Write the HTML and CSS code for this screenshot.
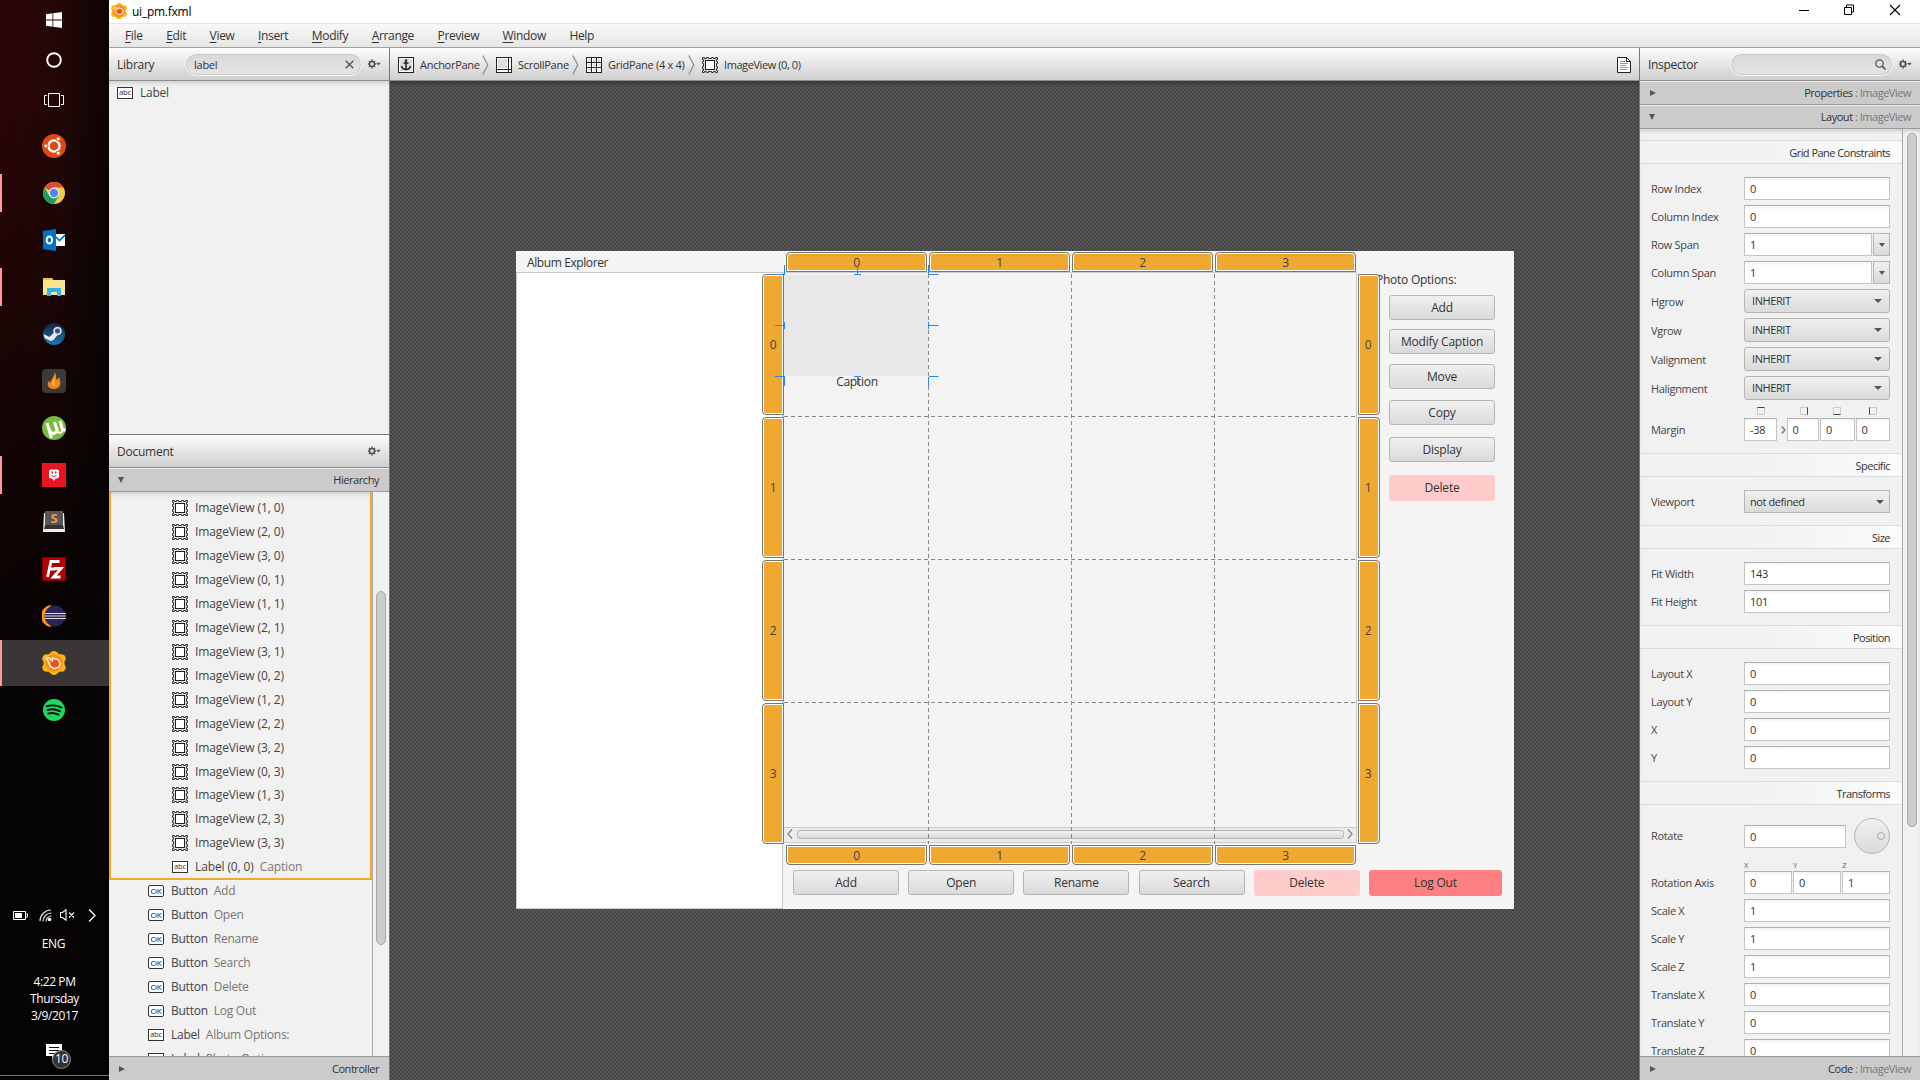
FILE: index.html
```html
<!DOCTYPE html>
<html lang="en">
<head>
<meta charset="utf-8">
<title>ui_pm.fxml</title>
<link rel="stylesheet" href="styles.css">
</head>
<body>
<svg class="defs" width="0" height="0" aria-hidden="true">
  <symbol id="imageview" viewBox="0 0 16 16"><path d="M.5.5h2v1h2v-1h2v1h3v-1h2v1h2v-1h2v2h-1v2h1v2h-1v3h1v2h-1v2h1v2h-2v-1h-2v1h-2v-1h-3v1h-2v-1h-2v1h-2v-2h1v-2h-1v-2h1v-3h-1v-2h1v-2h-1z" fill="#ddd" stroke="#333"/><rect x="3.5" y="3.5" width="9" height="9" fill="#fff" stroke="#222"/></symbol>
  <symbol id="abc" viewBox="0 0 16 16"><rect x=".5" y="2.5" width="15" height="11" fill="#fff" stroke="#333"/><text x="2" y="10.4" textLength="12" lengthAdjust="spacingAndGlyphs" font-size="7" fill="#333">abc</text></symbol>
  <symbol id="ok" viewBox="0 0 16 16"><rect x=".5" y="2.5" width="15" height="11" rx="1.5" fill="#fff" stroke="#333"/><text x="2.5" y="11" textLength="11" lengthAdjust="spacingAndGlyphs" font-size="8" fill="#222">OK</text></symbol>
  <symbol id="gear" viewBox="0 0 13 10"><circle cx="4" cy="5" r="2.5" fill="none" stroke="#555" stroke-width="1.6"/><path d="M4 .6v1.6M4 7.8v1.6M-.2 5h1.4M6.800 5h1.400M1 2l1 1M6 7l1 1M1 8l1-1M6 3l1-1" stroke="#555" stroke-width="1.5"/><path d="M8.200 3.800h4.600l-2.300 2.700z" fill="#555"/></symbol>
  <symbol id="crumb" viewBox="0 0 7 20"><path d="M.8.500l5 9.500-5 9.500" fill="none" stroke="#888" stroke-width="1.200"/></symbol>
  <symbol id="flower" viewBox="0 0 24 24"><g fill="#fdb515"><circle cx="12" cy="12" r="10.500"/><circle cx="12" cy="4.300" r="4.300"/><circle cx="12" cy="19.700" r="4.300"/><circle cx="4.600" cy="7.500" r="4.300"/><circle cx="19.400" cy="7.500" r="4.300"/><circle cx="4.600" cy="16.500" r="4.300"/><circle cx="19.400" cy="16.500" r="4.300"/></g><circle cx="12" cy="12" r="9" fill="#f9901e"/><circle cx="12.500" cy="12.500" r="4" fill="#f04e23"/><path d="M4.500 7.500l2-1 4 3.500 0-3 3 1 2.500.500 2.500 4-1.500 3.500-5 1.500-4-2.500-1-3z" fill="none" stroke="#fff" stroke-width="1.200"/></symbol>
</svg>
<div class="desktop">
  <nav class="taskbar">
    <div class="slot sys"><svg width="16" height="16" viewBox="0 0 16 16"><path d="M0 2.200L6.500 1.300v6.200H0zM7.300 1.200L16 0v7.500H7.300zM0 8.400h6.500v6.300L0 13.800zM7.300 8.400H16V16l-8.700-1.200z" fill="#fff"/></svg></div>
    <div class="slot sys"><svg width="16" height="16"><circle cx="8" cy="8" r="6.800" fill="none" stroke="#fff" stroke-width="1.900"/></svg></div>
    <div class="slot sys"><svg width="20" height="14"><path d="M4.500.5h11v13h-11zM3 2.500H.5v9H3M17 2.500h2.500v9H17" fill="none" stroke="#fff"/></svg></div>
    <div class="apps">
      <div class="slot"><svg width="24" height="24"><circle cx="12" cy="12" r="12" fill="#dd4814"/><circle cx="12" cy="12" r="5.600" fill="none" stroke="#fff" stroke-width="2.400"/><g stroke="#dd4814" stroke-width="1"><circle cx="3.900" cy="12" r="2.100" fill="#fff"/><circle cx="16.200" cy="4.900" r="2.100" fill="#fff"/><circle cx="16.200" cy="19.100" r="2.100" fill="#fff"/></g></svg></div>
      <div class="slot run"><svg width="22" height="22" viewBox="0 0 22 22"><circle cx="11" cy="11" r="11" fill="#fbc93d"/><path d="M11 11L1.500 5.500A11 11 0 0 1 20.500 5.500H11z" fill="#dc4b3e"/><path d="M1.500 5.500A11 11 0 0 0 11 22l4.800-8.300L11 11 6.200 13.700z" fill="#1a9f5a"/><circle cx="11" cy="11" r="5.400" fill="#eef"/><circle cx="11" cy="11" r="4.200" fill="#4a8af4"/></svg></div>
      <div class="slot"><svg width="22" height="22" viewBox="0 0 22 22"><path d="M0 2L13 0v22L0 20z" fill="#0072c6"/><path d="M13 5h9v12h-9z" fill="#fff"/><path d="M13 8l3.500 3.500L22 6" fill="none" stroke="#0072c6" stroke-width="1.600"/><ellipse cx="6.400" cy="11" rx="2.700" ry="3.600" fill="none" stroke="#fff" stroke-width="2"/></svg></div>
      <div class="slot run"><svg width="22" height="18" viewBox="0 0 22 18"><path d="M0 0h9l1 2h12v15H0z" fill="#fde48f"/><path d="M0 0h9l1 2H0z" fill="#f9c51f"/><path d="M4 18v-8h14v8h-4v-4H8v4z" fill="#35b0e8"/></svg></div>
      <div class="slot"><svg width="22" height="22"><defs><linearGradient id="st" x2="0" y2="1"><stop stop-color="#14213f"/><stop offset="1" stop-color="#1b78b0"/></linearGradient></defs><circle cx="11" cy="11" r="11" fill="url(#st)"/><path d="M.5 11l6 3 5-5 3 3-4 5-3 1-6-3z" fill="#e8e8ee"/><circle cx="14.500" cy="8" r="3.400" fill="#35558a" stroke="#dde" stroke-width="1.800"/></svg></div>
      <div class="slot"><svg width="24" height="24"><rect width="24" height="24" rx="4" fill="#3b3a3b"/><path d="M12.500 3c2.500 3.500 1 6 2.500 8l2-3c3 7 1 12-5 12s-8-5-5-8l1.500 2c0-4 4.500-6 4-11z" fill="#f58220"/><path d="M12.500 7c1 4-1 6 1 9l1.500-2c-1 4-4 4-5 2 0-4 2.500-5 2.500-9z" fill="#fdc02f"/></svg></div>
      <div class="slot"><svg width="24" height="24"><circle cx="12" cy="12" r="12" fill="#77bb41"/><path d="M5 7l4.500 15M7 13c2 6 6 5 7.500 2M12.500 6l3 9M18 5l2.500 9 3 0" fill="none" stroke="#fff" stroke-width="3"/><path d="M15 15c1.500 3 5 2 6-1" fill="none" stroke="#fff" stroke-width="2"/></svg></div>
      <div class="slot run"><svg width="24" height="24"><path fill="#ea1324" d="M0 0h24v24H0z"/><rect x="7" y="6.500" width="10" height="9" rx="2" fill="#fff"/><path d="M10 15h4l-2 3z" fill="#fff"/><path d="M9.500 8.500h1.500v2H9.500zM13 8.500h1.500v2H13z" fill="#ea1324"/><path d="M9.500 12c1 2 4 2 5 0" fill="none" stroke="#ea1324"/></svg></div>
      <div class="slot"><svg width="24" height="22"><path d="M2 2h20l1 19H1z" fill="#eee"/><path d="M3 0h18v14H3z" fill="#565656"/><path d="M3 14h18l1 4H2z" fill="#333"/><text x="12" y="12" text-anchor="middle" font-size="13" font-weight="700" fill="#f89b3c">S</text></svg></div>
      <div class="slot"><svg width="24" height="24"><rect x=".5" y=".5" width="23" height="23" fill="#b30000" stroke="#900" stroke-dasharray="1.500"/><path d="M5.500 20L9 4.500h8.500M7 12h6.500M12 11.500h7L11.500 20h7" fill="none" stroke="#fff" stroke-width="2.800"/></svg></div>
      <div class="slot"><svg width="24" height="22"><path d="M10 0a11 11 0 0 0 0 22A14 14 0 0 1 10 0" fill="#f7941e"/><circle cx="13" cy="11" r="10.500" fill="#2c2255"/><path d="M3 8.500h21M3 11h21M3 13.500h21" stroke="#dfe0f0" stroke-width="1.200"/></svg></div>
      <div class="slot run active"><svg width="24" height="24"><use href="#flower"/></svg></div>
      <div class="slot"><svg width="22" height="22"><circle cx="11" cy="11" r="11" fill="#1ed760"/><path d="M3.500 7.300c5-1.600 10.500-1 15 1.300M4.500 11c4.500-1.300 8.500-.8 12.500 1.300M5.300 14.500c4-1 7-.6 10.200 1.200" fill="none" stroke="#111" stroke-width="1.900" stroke-linecap="round"/></svg></div>
    </div>
    <div class="tray">
      <svg width="15" height="9"><path d="M.5.500h12v8H.5zM13 3h1.500v3H13" fill="none" stroke="#fff"/><path d="M2 2h7v5H2z" fill="#fff"/></svg>
      <svg width="13" height="13"><path d="M1 12A11 11 0 0 1 12 1M4 12.500A8.500 8.500 0 0 1 12.500 4M7 12.500A5.500 5.500 0 0 1 12.500 7" fill="none" stroke="#ddd" stroke-width="1.200"/><circle cx="10.500" cy="10.500" r="1.800" fill="#fff"/></svg>
      <svg width="15" height="12"><path d="M.5 3.500H2.500L6 .800v10.400L2.500 8.500H.5zM9 3.500l5 5M14 3.500l-5 5" fill="none" stroke="#fff" stroke-width="1.100"/></svg>
      <svg width="8" height="13"><path d="M1 .500l6 6-6 6" fill="none" stroke="#fff" stroke-width="1.300"/></svg>
    </div>
    <div class="lang">ENG</div>
    <div class="clock"><span>4:22 PM</span><span>Thursday</span><span>3/9/2017</span></div>
    <div class="notify"><svg width="16" height="16"><path d="M0 0h16v12H9l-3 3.500V12H0z" fill="#fff"/><path d="M3 3.500h10M3 6.500h10M3 9.500h6" stroke="#111"/></svg><span class="badge">10</span></div>
  </nav>

  <main class="app">
    <header class="titlebar">
      <svg width="16" height="16" class="appicon"><use href="#flower"/></svg><span class="title">ui_pm.fxml</span>
      <svg class="winbtns" width="102" height="12"><path d="M0 6.500h10" stroke="#000"/><path d="M45.500 3.500h7v7h-7zM47.500 3v-2h7v7h-2" fill="none" stroke="#000"/><path d="M91 1l10 10M101 1L91 11" stroke="#000" stroke-width="1.100"/></svg>
    </header>
    <nav class="menubar"><span><u>F</u>ile</span><span><u>E</u>dit</span><span><u>V</u>iew</span><span><u>I</u>nsert</span><span><u>M</u>odify</span><span><u>A</u>rrange</span><span><u>P</u>review</span><span><u>W</u>indow</span><span>Help</span></nav>
    <div class="workspace">
      <aside class="left">
        <div class="bar"><span class="barname">Library</span>
          <div class="pill lib"><span>label</span><svg width="9" height="9"><path d="M.700.700l7.600 7.600M8.300.700L.700 8.300" stroke="#555" stroke-width="1.400"/></svg></div>
          <svg width="13" height="10"><use href="#gear"/></svg></div>
        <div class="library"><div class="item"><svg width="16" height="16"><use href="#abc"/></svg>Label</div></div>
        <div class="bar doc"><span class="barname">Document</span><svg width="13" height="10"><use href="#gear"/></svg></div>
        <div class="fold"><i class="tri down"></i><span>Hierarchy</span></div>
        <div class="treewrap">
          <div class="tree">
            <div class="group">
              <div class="item"><svg width="16" height="16"><use href="#imageview"/></svg>ImageView (1, 0)</div>
              <div class="item"><svg width="16" height="16"><use href="#imageview"/></svg>ImageView (2, 0)</div>
              <div class="item"><svg width="16" height="16"><use href="#imageview"/></svg>ImageView (3, 0)</div>
              <div class="item"><svg width="16" height="16"><use href="#imageview"/></svg>ImageView (0, 1)</div>
              <div class="item"><svg width="16" height="16"><use href="#imageview"/></svg>ImageView (1, 1)</div>
              <div class="item"><svg width="16" height="16"><use href="#imageview"/></svg>ImageView (2, 1)</div>
              <div class="item"><svg width="16" height="16"><use href="#imageview"/></svg>ImageView (3, 1)</div>
              <div class="item"><svg width="16" height="16"><use href="#imageview"/></svg>ImageView (0, 2)</div>
              <div class="item"><svg width="16" height="16"><use href="#imageview"/></svg>ImageView (1, 2)</div>
              <div class="item"><svg width="16" height="16"><use href="#imageview"/></svg>ImageView (2, 2)</div>
              <div class="item"><svg width="16" height="16"><use href="#imageview"/></svg>ImageView (3, 2)</div>
              <div class="item short"><svg width="16" height="16"><use href="#imageview"/></svg>ImageView (0, 3)</div>
              <div class="item"><svg width="16" height="16"><use href="#imageview"/></svg>ImageView (1, 3)</div>
              <div class="item"><svg width="16" height="16"><use href="#imageview"/></svg>ImageView (2, 3)</div>
              <div class="item"><svg width="16" height="16"><use href="#imageview"/></svg>ImageView (3, 3)</div>
              <div class="item"><svg width="16" height="16"><use href="#abc"/></svg>Label (0, 0)<em>Caption</em></div>
            </div>
            <div class="siblings">
              <div class="item"><svg width="16" height="16"><use href="#ok"/></svg>Button<em>Add</em></div>
              <div class="item"><svg width="16" height="16"><use href="#ok"/></svg>Button<em>Open</em></div>
              <div class="item"><svg width="16" height="16"><use href="#ok"/></svg>Button<em>Rename</em></div>
              <div class="item"><svg width="16" height="16"><use href="#ok"/></svg>Button<em>Search</em></div>
              <div class="item"><svg width="16" height="16"><use href="#ok"/></svg>Button<em>Delete</em></div>
              <div class="item"><svg width="16" height="16"><use href="#ok"/></svg>Button<em>Log Out</em></div>
              <div class="item"><svg width="16" height="16"><use href="#abc"/></svg>Label<em>Album Options:</em></div>
              <div class="item"><svg width="16" height="16"><use href="#abc"/></svg>Label<em>Photo Options:</em></div>
            </div>
          </div>
          <div class="track"><div class="thumb tree-thumb"></div></div>
        </div>
        <div class="fold foot"><i class="tri right"></i><span>Controller</span></div>
      </aside>

      <section class="center">
        <div class="bar crumbs">
          <svg width="16" height="16"><rect x=".5" y=".5" width="15" height="15" fill="#fff" stroke="#222"/><path d="M2 2h12v12H2z" fill="#ddd"/><path d="M8 4v8M5.500 6h5M3.500 9c.500 2 2 3.500 4.500 3.500s4-1.500 4.500-3.500" fill="none" stroke="#222" stroke-width="1.500"/><circle cx="8" cy="3.500" r="1.200" fill="#222"/></svg><span class="c1">AnchorPane</span><svg class="sep" width="7" height="20"><use href="#crumb"/></svg>
          <svg width="16" height="16"><rect x=".5" y=".5" width="15" height="15" fill="#fff" stroke="#222"/><path d="M2 2h9v9H2z" fill="#ddd"/><path d="M12.500 1v15M1 12.500h15" stroke="#222"/></svg><span class="c2">ScrollPane</span><svg class="sep" width="7" height="20"><use href="#crumb"/></svg>
          <svg width="16" height="16"><rect x=".5" y=".5" width="15" height="15" fill="#fff" stroke="#222"/><path d="M2 2h3v3H2zM7 2h3v3H7zM12 2h2v3h-2zM2 7h3v2H2zM7 7h3v2H7zM12 7h2v2h-2zM2 12h3v2H2zM7 12h3v2H7z" fill="#ddd"/><path d="M5.500 0v16M10.500 0v16M0 5.500h16M0 10.500h16" stroke="#222"/></svg><span class="c3">GridPane (4 x 4)</span><svg class="sep" width="7" height="20"><use href="#crumb"/></svg>
          <svg width="16" height="16"><use href="#imageview"/></svg><span class="c4">ImageView (0, 0)</span>
          <svg class="docicon" width="14" height="16"><path d="M.5.500h9l4 4v11H.5z" fill="#fff" stroke="#222"/><path d="M9.500.500v4h4" fill="none" stroke="#222"/><path d="M3 4.500h5M3 6.500h8M3 8.500h6M3 10.500h8M3 12.500h7" stroke="#999"/></svg>
        </div>
        <div class="canvas">
          <div class="pane">
            <div class="album"><span>Album Explorer</span><div class="list"></div></div>
            <div class="scrollpane"><div class="hbar"><svg width="6" height="10"><path d="M5 .500L1 5l4 4.500" fill="none" stroke="#888" stroke-width="1.300"/></svg><div></div><svg width="6" height="10"><path d="M1 .500L5 5 1 9.500" fill="none" stroke="#888" stroke-width="1.300"/></svg></div></div>
            <div class="caption">Caption</div>
            <div class="photo"><span>Photo Options:</span>
              <b class="btn">Add</b><b class="btn">Modify Caption</b><b class="btn">Move</b><b class="btn">Copy</b><b class="btn">Display</b><b class="btn pink">Delete</b></div>
            <div class="actions"><b class="btn">Add</b><b class="btn">Open</b><b class="btn">Rename</b><b class="btn">Search</b><b class="btn pink">Delete</b><b class="btn red">Log Out</b></div>
            <svg class="lines" width="576" height="572"><g fill="none" stroke="#888" stroke-dasharray="4 3"><path d="M144.500 0v570M287.500 0v570M430.500 0v570M0 142.500h574M0 285.500h574M0 428.500h574"/></g></svg>
            <div class="heads top"><b>0</b><b>1</b><b>2</b><b>3</b></div>
            <div class="heads bottom"><b>0</b><b>1</b><b>2</b><b>3</b></div>
            <div class="heads side lft"><b>0</b><b>1</b><b>2</b><b>3</b></div>
            <div class="heads side rgt"><b>0</b><b>1</b><b>2</b><b>3</b></div>
            <svg class="handles" width="164" height="122"><path d="M9.500 0v9M0 9.500h10M82.500 1v8M79 9.500h7M153.500 0v9M154 9.500h9.500M0 60.500h9M9.500 57v7M154 60.500h9.500M153.500 57v7M0 111.500h10M9.500 112v9M79 111.500h7M82.500 112v8M154 111.500h9.500M153.500 112v9" fill="none" stroke="#2a86f8"/></svg>
          </div>
        </div>
      </section>

      <aside class="inspector">
        <div class="bar"><span class="barname">Inspector</span>
          <div class="pill insp"><svg width="11" height="11"><circle cx="4.500" cy="4.500" r="3.700" fill="none" stroke="#555" stroke-width="1.300"/><path d="M7 7l3.500 3.500" stroke="#555" stroke-width="1.600"/></svg></div>
          <svg width="13" height="10"><use href="#gear"/></svg></div>
        <div class="fold"><i class="tri right"></i><span>Properties <em>: ImageView</em></span></div>
        <div class="fold"><i class="tri down"></i><span>Layout <em>: ImageView</em></span></div>
        <div class="formwrap">
          <div class="form">
            <h3>Grid Pane Constraints</h3>
            <div class="fields">
              <div class="row"><label>Row Index</label><div class="in">0</div></div>
              <div class="row"><label>Column Index</label><div class="in">0</div></div>
              <div class="row"><label>Row Span</label><div class="in">1</div><div class="drop"><i></i></div></div>
              <div class="row"><label>Column Span</label><div class="in">1</div><div class="drop"><i></i></div></div>
              <div class="row low"><label>Hgrow</label><div class="combo">INHERIT<i></i></div></div>
              <div class="row low"><label>Vgrow</label><div class="combo">INHERIT<i></i></div></div>
              <div class="row low"><label>Valignment</label><div class="combo">INHERIT<i></i></div></div>
              <div class="row low"><label>Halignment</label><div class="combo">INHERIT<i></i></div></div>
              <div class="row margin"><label>Margin</label>
                <div class="mcell w33"><i class="sq t"></i><div class="in">-38</div></div>
                <svg width="5" height="8"><path d="M.700.500L4 4 .700 7.500" fill="none" stroke="#777" stroke-width="1.300"/></svg>
                <div class="mcell w33"><i class="sq r"></i><div class="in">0</div></div>
                <div class="mcell w34"><i class="sq b"></i><div class="in">0</div></div>
                <div class="mcell w34"><i class="sq l"></i><div class="in">0</div></div>
              </div>
            </div>
            <h3>Specific</h3>
            <div class="fields"><div class="row"><label>Viewport</label><div class="combo flat">not defined<i></i></div></div></div>
            <h3>Size</h3>
            <div class="fields">
              <div class="row"><label>Fit Width</label><div class="in">143</div></div>
              <div class="row"><label>Fit Height</label><div class="in">101</div></div>
            </div>
            <h3>Position</h3>
            <div class="fields">
              <div class="row"><label>Layout X</label><div class="in">0</div></div>
              <div class="row"><label>Layout Y</label><div class="in">0</div></div>
              <div class="row"><label>X</label><div class="in">0</div></div>
              <div class="row"><label>Y</label><div class="in">0</div></div>
            </div>
            <h3>Transforms</h3>
            <div class="fields">
              <div class="row rotate"><label>Rotate</label><div class="in">0</div><div class="dial"><i></i></div></div>
              <div class="row axis"><label>Rotation Axis</label>
                <div class="acell"><small>X</small><div class="in">0</div></div>
                <div class="acell"><small>Y</small><div class="in">0</div></div>
                <div class="acell"><small>Z</small><div class="in">1</div></div>
              </div>
              <div class="row"><label>Scale X</label><div class="in">1</div></div>
              <div class="row"><label>Scale Y</label><div class="in">1</div></div>
              <div class="row"><label>Scale Z</label><div class="in">1</div></div>
              <div class="row"><label>Translate X</label><div class="in">0</div></div>
              <div class="row"><label>Translate Y</label><div class="in">0</div></div>
              <div class="row"><label>Translate Z</label><div class="in">0</div></div>
            </div>
          </div>
          <div class="track"><div class="thumb form-thumb"></div></div>
        </div>
        <div class="fold foot"><i class="tri right"></i><span>Code <em>: ImageView</em></span></div>
      </aside>
    </div>
  </main>
</div>
</body>
</html>
```
FILE: styles.css
```css
* { box-sizing: border-box; }
body { margin: 0; font: 12px/16px "Open Sans", "Noto Sans", sans-serif; letter-spacing: -0.25px; color: #333; overflow: hidden; }
svg { display: block; flex: none; }
.defs { position: absolute; }
em { font-style: normal; color: #777; }
.desktop { display: flex; width: 1920px; height: 1080px; }

/* Taskbar */
.taskbar { width: 109px; height: 1080px; display: flex; flex-direction: column; background: linear-gradient(#777, #777) 0 1075px / 109px 1px no-repeat, linear-gradient(170deg, rgba(0,0,0,0) 10%, #050303 62%), linear-gradient(90deg, #2a0505, #230707 55%, #0d0404); color: #fff; }
.slot { height: 47px; display: flex; align-items: center; justify-content: center; padding-right: 1px; }
.slot.sys { height: 40px; }
.apps { margin-top: 2px; }
.run { background: linear-gradient(#ff99a0, #ff99a0) 0 50% / 2px 38px no-repeat; }
.run.active { background: linear-gradient(#ff99a0, #ff99a0) 0 1px / 2px 46px no-repeat, linear-gradient(#3a3637, #3a3637) 0 1px no-repeat; }
.tray { margin-top: 170px; height: 24px; padding: 0 13px; display: flex; align-items: center; gap: 11px; }
.tray svg:nth-child(3) { margin-left: -3px; }
.tray svg:last-child { margin-left: 2px; }
.lang { margin-top: 9px; text-align: center; letter-spacing: -0.3px; padding-right: 2px; }
.clock { margin-top: 21px; display: flex; flex-direction: column; align-items: center; line-height: 17px; letter-spacing: -0.4px; }
.notify { position: relative; margin: 20px 0 0 46px; height: 32px; }
.badge { position: absolute; left: 6px; top: 6px; width: 19px; height: 19px; border-radius: 50%; background: #333; border: 1px solid #888; text-align: center; line-height: 16px; }

/* Window chrome */
.app { width: 1811px; display: flex; flex-direction: column; }
.titlebar { height: 24px; display: flex; align-items: center; background: #fff; border-bottom: 1px solid #e4e4e4; color: #000; padding: 0 19px 1px 2px; }
.title { margin: 2px 0 0 5px; letter-spacing: -0.25px; }
.winbtns { margin-left: auto; margin-top: -3px; }
.menubar { height: 24px; display: flex; align-items: center; gap: 23.5px; padding-left: 16px; background: linear-gradient(#f8f8f8, #e6e6e6); border-bottom: 1px solid #a0a0a0; letter-spacing: -0.34px; }
.menubar u { text-underline-offset: 2px; }
.workspace { flex: 1; min-height: 0; display: flex; }

.bar { height: 33px; flex: none; display: flex; align-items: center; background: linear-gradient(#fdfdfd, #cfcfcf); border-bottom: 1px solid #8c8c8c; padding: 0 8px; }
.bar .barname { flex: 1; padding-top: 2px; }
.pill { height: 23px; border: 1px solid #f5f5f5; border-radius: 12px; box-shadow: inset 0 0 0 1px #c8c8c8; display: flex; align-items: center; justify-content: space-between; padding: 0 7px 0 8px; margin-right: 6px; font-size: 11px; background: linear-gradient(#d8d8d8, #e6e6e6); }
.pill span { padding-top: 2px; }
.pill.lib { width: 177px; }
.pill.insp { width: 163px; justify-content: flex-end; padding-right: 6px; }
.fold { height: 24px; flex: none; display: flex; align-items: center; justify-content: space-between; background: #cbcbcb; border-top: 1px solid #eee; border-bottom: 1px solid #999; padding: 0 10px 0 9px; font-size: 11px; letter-spacing: -0.45px; }
.fold.foot { border-top-color: #999; border-bottom: 0; padding-top: 1px; }
.tri { width: 0; height: 0; }
.tri.down { border: 3px solid transparent; border-top: 6px solid #555; border-bottom: 0; }
.tri.right { border: 3px solid transparent; border-left: 6px solid #555; border-right: 0; margin-left: 1px; }

/* Left column */
.left { width: 281px; border-right: 1px solid #777; display: flex; flex-direction: column; background: #f1f1f1; }
.library { height: 354px; border-bottom: 1px solid #777; padding-left: 8px; box-shadow: inset 0 4px 4px -2px #ccc; }
.item { height: 24px; display: flex; align-items: center; gap: 7px; white-space: pre; color: #444; letter-spacing: -0.12px; }
.item.short { height: 23px; }
.item em { margin-left: -1px; }
.library .item, .siblings .item { letter-spacing: -0.25px; }
.treewrap { flex: 1; min-height: 0; display: flex; }
.tree { width: 263px; overflow: hidden; }
.group { width: 263px; height: 388px; margin-bottom: -1px; border: 2px solid #efa830; border-top: 0; padding: 4px 0 0 61px; box-shadow: inset 0 4px 4px -2px #ccc; }
.siblings { padding-left: 39px; }
.track { flex: 1; border-left: 1px solid #aaa; padding: 0 3px; }
.thumb { width: 10px; margin: 0 auto; background: #ccc; border: 1px solid #aaa; border-radius: 5px; }
.tree-thumb { margin-top: 99px; height: 354px; }

/* Breadcrumbs and canvas */
.center { width: 1249px; display: flex; flex-direction: column; }
.crumbs { padding: 1px 8px 0; font-size: 11px; letter-spacing: -0.28px; }
.crumbs span { margin: 0 6px; white-space: nowrap; }
.crumbs .sep { margin-right: 7px; }
.c1 { width: 56px; } .c2 { width: 48px; } .c3 { width: 74px; }
.c4 { letter-spacing: -0.42px; }
.docicon { margin-left: auto; }
.canvas { flex: 1; padding: 170px 0 0 126px; background: conic-gradient(#464646 25%, #565656 0 50%, #464646 0 75%, #565656 0) 0 0 / 4px 4px; box-shadow: inset 0 4px 5px -2px #333; }
.pane { position: relative; width: 998px; height: 658px; background: #f4f4f4; }
.album { width: 267px; height: 658px; display: flex; flex-direction: column; }
.album span { height: 21px; line-height: 24px; padding-left: 11px; letter-spacing: -0.4px; }
.list { flex: 1; background: #fff; border: 1px solid #c8c8c8; }
.scrollpane { position: absolute; left: 267px; top: 21px; width: 574px; height: 571px; border: 1px solid #ccc; display: flex; align-items: flex-end; background: linear-gradient(#e8e8e8, #e8e8e8) 0 2px / 144px 101px no-repeat; }
.hbar { width: 100%; height: 15px; border-top: 1px solid #ccc; background: #ececec; display: flex; align-items: center; justify-content: space-between; padding: 0 3px 2px; }
.hbar div { width: 547px; height: 9px; border: 1px solid #b5b5b5; border-radius: 3px; background: linear-gradient(#f2f2f2, #d8d8d8); }
.caption { position: absolute; left: 269px; top: 123px; width: 144px; text-align: center; }
.btn { font-weight: 400; height: 25px; width: 106px; border: 1px solid #b5b5b5; border-radius: 3px; background: linear-gradient(#f0f0f0, #dadada); line-height: 23px; text-align: center; letter-spacing: -0.2px; }
.btn.pink { height: 26px; border: 0; background: #ffcbcb; line-height: 25px; }
.btn.red { height: 26px; width: 133px; border: 0; background: #ff8080; line-height: 25px; }
.photo { position: absolute; left: 860px; top: 21px; display: flex; flex-direction: column; }
.photo .btn { margin-left: 13px; }
.photo .btn:nth-child(2) { margin-top: 7px; }
.photo .btn:nth-child(3) { margin-top: 9px; }
.photo .btn:nth-child(4) { margin-top: 10px; }
.photo .btn:nth-child(5) { margin-top: 11px; }
.photo .btn:nth-child(6) { margin-top: 12px; }
.photo .btn:nth-child(7) { margin-top: 13px; }
.actions { position: absolute; left: 277px; top: 619px; display: flex; gap: 9.2px; }
.lines { position: absolute; left: 268px; top: 23px; }
.heads { position: absolute; left: 270px; display: grid; grid-template-columns: repeat(4, 141px); gap: 2px; }
.heads b { height: 20px; border: 1px solid #777; box-shadow: inset 0 0 0 1px #fff; background: #efa830; font-weight: 400; display: flex; align-items: center; justify-content: center; color: #444; padding-top: 1px; }
.top { top: 1px; } .top b { border-radius: 4px 4px 0 0; }
.bottom { top: 594px; } .bottom b { border-radius: 0 0 4px 4px; }
.side { grid-template-columns: 22px; top: 23px; }
.side b { height: 141px; padding-top: 0; }
.lft { left: 246px; } .lft b { border-radius: 4px 0 0 4px; }
.rgt { left: 842px; } .rgt b { border-radius: 0 4px 4px 0; padding-right: 2px; }
.handles { position: absolute; left: 259px; top: 14px; }

/* Inspector */
.inspector { width: 281px; border-left: 1px solid #777; display: flex; flex-direction: column; background: #f1f1f1; font-size: 11px; letter-spacing: -0.32px; }
.inspector .barname { font-size: 12px; }
.inspector .fold { padding: 0 9px; letter-spacing: -0.48px; }
.formwrap { flex: 1; min-height: 0; display: flex; box-shadow: inset 0 4px 4px -2px #ccc; }
.form { width: 262px; padding-top: 11px; overflow: hidden; }
h3 { margin: 0; height: 24px; border: solid #dcdcdc; border-width: 1px 0; background: linear-gradient(90deg, #f1f1f1 40%, #fbfbfb); font: inherit; line-height: 23px; text-align: right; padding-right: 12px; letter-spacing: -0.54px; }
.fields { padding: 13px 12px 12px 11px; display: flex; flex-direction: column; gap: 5px; }
.row { display: flex; align-items: center; }
.row label { width: 93px; flex: none; color: #444; }
.low label { padding-top: 1px; }
.in { flex: 1; height: 23px; border: 1px solid #c4c4c4; border-top-color: #b0b0b0; background: linear-gradient(#f4f4f4, #fff 4px); line-height: 21px; padding-left: 5px; }
.drop { width: 17px; height: 23px; margin-left: 1px; border: 1px solid #b5b5b5; background: linear-gradient(#f0f0f0, #dadada); display: flex; align-items: center; justify-content: center; }
.drop i, .combo i { border: 4px solid transparent; border-top-color: #555; border-bottom: 0; }
.drop i { border-width: 4px 3.5px 0; }
.combo { flex: 1; height: 24px; border: 1px solid #b5b5b5; border-radius: 3px; background: linear-gradient(#f0f0f0, #dadada); display: flex; align-items: center; justify-content: space-between; padding: 0 7px; letter-spacing: -0.42px; }
.combo.flat { height: 23px; border-radius: 0; padding: 0 5px; }
.margin { height: 36px; align-items: flex-end; }
.margin label, .axis label { height: 19px; }
.margin > svg { margin: 0 1px 7px 4px; }
.mcell { display: flex; flex-direction: column; gap: 3px; width: 34px; margin-left: 1px; }
.mcell.w33 { width: 33px; margin-left: 0; }
.mcell.w34 { width: 35px; }
.mcell .in { flex: none; }
.sq { width: 8px; height: 8px; margin-left: 13px; border: 1px solid #ccc; }
.sq.t { border-top-color: #444; } .sq.r { border-right-color: #444; } .sq.b { border-bottom-color: #444; } .sq.l { border-left-color: #444; }
.dial { width: 36px; height: 36px; margin-left: 8px; border: 1px solid #b5b5b5; border-radius: 50%; background: linear-gradient(#f0f0f0, #dadada); display: flex; align-items: center; justify-content: flex-end; padding-right: 4px; }
.dial i { width: 8px; height: 8px; border: 1px solid #aaa; border-radius: 50%; }
.axis { height: 35px; align-items: flex-end; gap: 1px; }
.axis label { margin-right: -1px; }
.acell { flex: 1; }
small { display: block; height: 12px; line-height: 11px; font-size: 8px; color: #666; }
.form-thumb { margin-top: 4px; height: 694px; }
```
